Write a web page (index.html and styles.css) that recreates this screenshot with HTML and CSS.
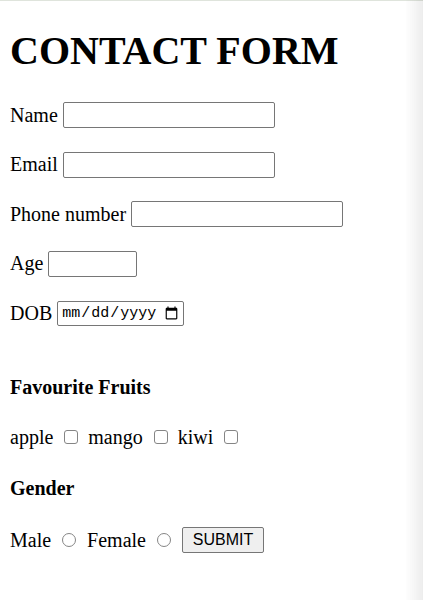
FILE: index.html
```html
<!DOCTYPE html>
<html lang="en">
<head>
<meta charset="utf-8">
<title>Contact Form</title>
<link rel="stylesheet" href="styles.css">
</head>
<body>
<h1 class="title">CONTACT FORM</h1>
<form class="form">
  <div class="row"><label for="name">Name</label><input class="text name" id="name" type="text"></div>
  <div class="row"><label for="email">Email</label><input class="text name" id="email" type="email"></div>
  <div class="row"><label for="phone">Phone number</label><input class="text name" id="phone" type="tel"></div>
  <div class="row"><label for="age">Age</label><input class="text age" id="age" type="number"></div>
  <div class="row"><label for="dob">DOB</label><input class="text dob" id="dob" type="date"></div>

  <h4 class="section section-fruits">Favourite Fruits</h4>
  <div class="row choices">
    <label for="apple">apple</label><input class="check" id="apple" type="checkbox">
    <label for="mango">mango</label><input class="check" id="mango" type="checkbox">
    <label for="kiwi">kiwi</label><input class="check" id="kiwi" type="checkbox">
  </div>

  <h4 class="section section-gender">Gender</h4>
  <div class="row choices last">
    <label for="male">Male</label><input class="radio" id="male" name="gender" type="radio">
    <label for="female">Female</label><input class="radio" id="female" name="gender" type="radio">
    <button class="submit" type="submit">SUBMIT</button>
  </div>
</form>
<div class="edge-shade"></div>
</body>
</html>
```

FILE: styles.css
```css
html {
  border-top: 1px solid #dfe4dc;
}
body {
  margin: 0 10px 8px;
  font-family: "Liberation Serif", "Times New Roman", serif;
  font-size: 20px;
  color: #000;
  background: #fff;
}
.title {
  margin: 27px 0 26px;
  font-size: 40px;
  line-height: 46px;
  font-weight: bold;
}
.form {
  margin: 0;
}
.row {
  display: flex;
  align-items: center;
  height: 30px;
  margin-bottom: 19.5px;
  column-gap: 5px;
  line-height: 23px;
}
.text {
  box-sizing: border-box;
  height: 26px;
  margin: 0;
  padding: 1px 3px;
  border: 1px solid #767676;
  border-radius: 2px;
  background: #fff;
  font-family: "Liberation Sans", Arial, sans-serif;
  font-size: 16px;
}
.name { width: 212px; }
.age { width: 89px; }
.dob {
  width: 127px;
  height: 25px;
  padding: 0 2px 0 3px;
  font-family: "Liberation Mono", "DejaVu Sans Mono", monospace;
  font-size: 15px;
}
.section {
  margin: 0;
  font-size: 20px;
  line-height: 23px;
  font-weight: bold;
}
.section-fruits { margin-top: 47.5px; margin-bottom: 23.5px; }
.section-gender { margin-top: 24.5px; margin-bottom: 25.5px; }
.choices {
  column-gap: 0;
}
.check {
  appearance: none;
  box-sizing: border-box;
  width: 14px;
  height: 14px;
  margin: 0 10px 0 11px;
  border: 1px solid #858585;
  border-radius: 3px;
  background: #fff;
}
.radio {
  appearance: none;
  box-sizing: border-box;
  width: 14px;
  height: 14px;
  margin: 0 11px 0 11px;
  border: 1px solid #858585;
  border-radius: 50%;
  background: #fff;
}
.submit {
  box-sizing: border-box;
  width: 82px;
  height: 26px;
  margin: 0;
  padding: 1px 6px;
  border: 1px solid #767676;
  border-radius: 2px;
  background: #efefef;
  font-family: "Liberation Sans", Arial, sans-serif;
  font-size: 16px;
  color: #000;
}
.edge-shade {
  position: fixed;
  top: 0;
  right: 0;
  width: 18px;
  height: 100%;
  background: linear-gradient(to right, rgba(0,0,0,0), rgba(0,0,0,0.07));
  pointer-events: none;
}
```
